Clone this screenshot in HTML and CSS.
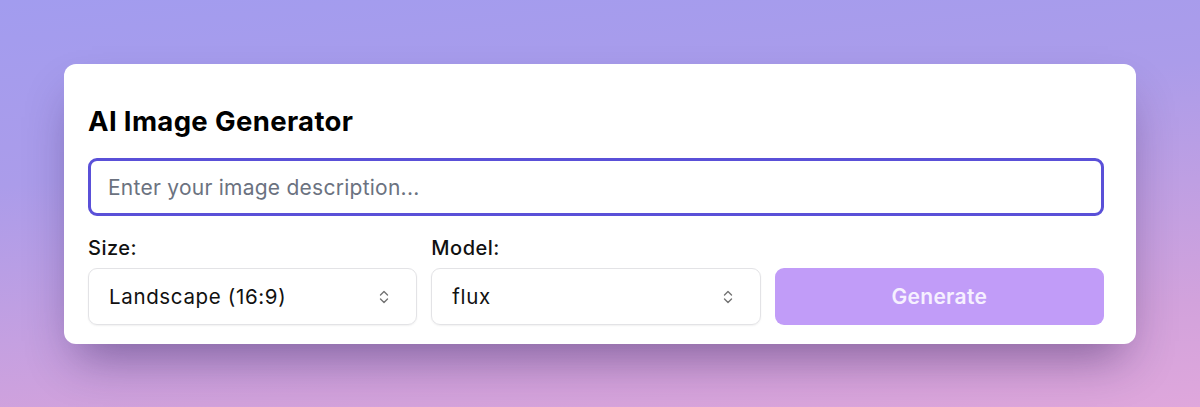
FILE: index.html
```html
<!DOCTYPE html>
<html lang="en">
<head>
<meta charset="utf-8">
<title>AI Image Generator</title>
<link rel="stylesheet" href="styles.css">
</head>
<body>
<main class="page">
  <section class="card">
    <h1 class="title">AI Image Generator</h1>
    <input class="prompt" type="text" placeholder="Enter your image description...">
    <div class="controls">
      <div class="field">
        <label class="label">Size:</label>
        <div class="select">
          <span>Landscape (16:9)</span>
          <svg class="chev" viewBox="0 0 10 16" width="10" height="16"><path d="M1.5 6 L5 2.5 L8.5 6 M1.5 10 L5 13.5 L8.5 10" fill="none" stroke="#737373" stroke-width="1.4" stroke-linecap="round" stroke-linejoin="round"/></svg>
        </div>
      </div>
      <div class="field">
        <label class="label">Model:</label>
        <div class="select">
          <span>flux</span>
          <svg class="chev" viewBox="0 0 10 16" width="10" height="16"><path d="M1.5 6 L5 2.5 L8.5 6 M1.5 10 L5 13.5 L8.5 10" fill="none" stroke="#737373" stroke-width="1.4" stroke-linecap="round" stroke-linejoin="round"/></svg>
        </div>
      </div>
      <div class="field field-btn">
        <button class="generate" type="button">Generate</button>
      </div>
    </div>
  </section>
</main>
</body>
</html>
```

FILE: styles.css
```css
* { box-sizing: border-box; }
html, body { margin: 0; padding: 0; }
body {
  width: 1200px;
  height: 407px;
  overflow: hidden;
  font-family: Inter, "Noto Sans", sans-serif;
  background: linear-gradient(174deg, #a29cef 0%, #ab9cea 35%, #d2a2dc 80%, #dfa7dc 100%);
}
.page {
  padding: 64px 64px 0 64px;
}
.card {
  background: #ffffff;
  border-radius: 12px;
  padding: 40px 32px 19px 24px;
  box-shadow: 0 25px 45px -12px rgba(40, 20, 80, 0.45);
}
.title {
  margin: 0 0 20px 0;
  font-size: 27.5px;
  font-weight: 700;
  line-height: 34px;
  color: #000;
  letter-spacing: 0.35px;
}
.prompt {
  display: block;
  width: 100%;
  height: 58px;
  border: 3px solid #5a50d8;
  border-radius: 9px;
  padding: 0 17px;
  font-family: inherit;
  font-size: 21px;
  letter-spacing: 0.25px;
  color: #111;
  outline: none;
}
.prompt::placeholder { color: #6b7280; }
.controls {
  display: grid;
  grid-template-columns: 1fr 1fr 1fr;
  gap: 14px;
  margin-top: 20px;
  align-items: end;
}
.field {
  display: flex;
  flex-direction: column;
}
.label {
  font-size: 20px;
  font-weight: 500;
  color: #111;
  line-height: 24px;
  letter-spacing: 0.5px;
  margin-bottom: 8px;
}
.select {
  height: 57px;
  border: 1px solid #e3e3e6;
  border-radius: 9px;
  box-shadow: 0 1px 2px rgba(0,0,0,0.06);
  display: flex;
  align-items: center;
  justify-content: space-between;
  padding: 0 27px 0 20px;
  font-size: 20.5px;
  letter-spacing: 0.65px;
  color: #111;
}
.chev { display: block; }
.generate {
  height: 57px;
  width: 100%;
  border: none;
  border-radius: 9px;
  background: #c19cf8;
  color: #f6f0ff;
  font-family: inherit;
  font-size: 21px;
  font-weight: 600;
  letter-spacing: 0.3px;
}
```
